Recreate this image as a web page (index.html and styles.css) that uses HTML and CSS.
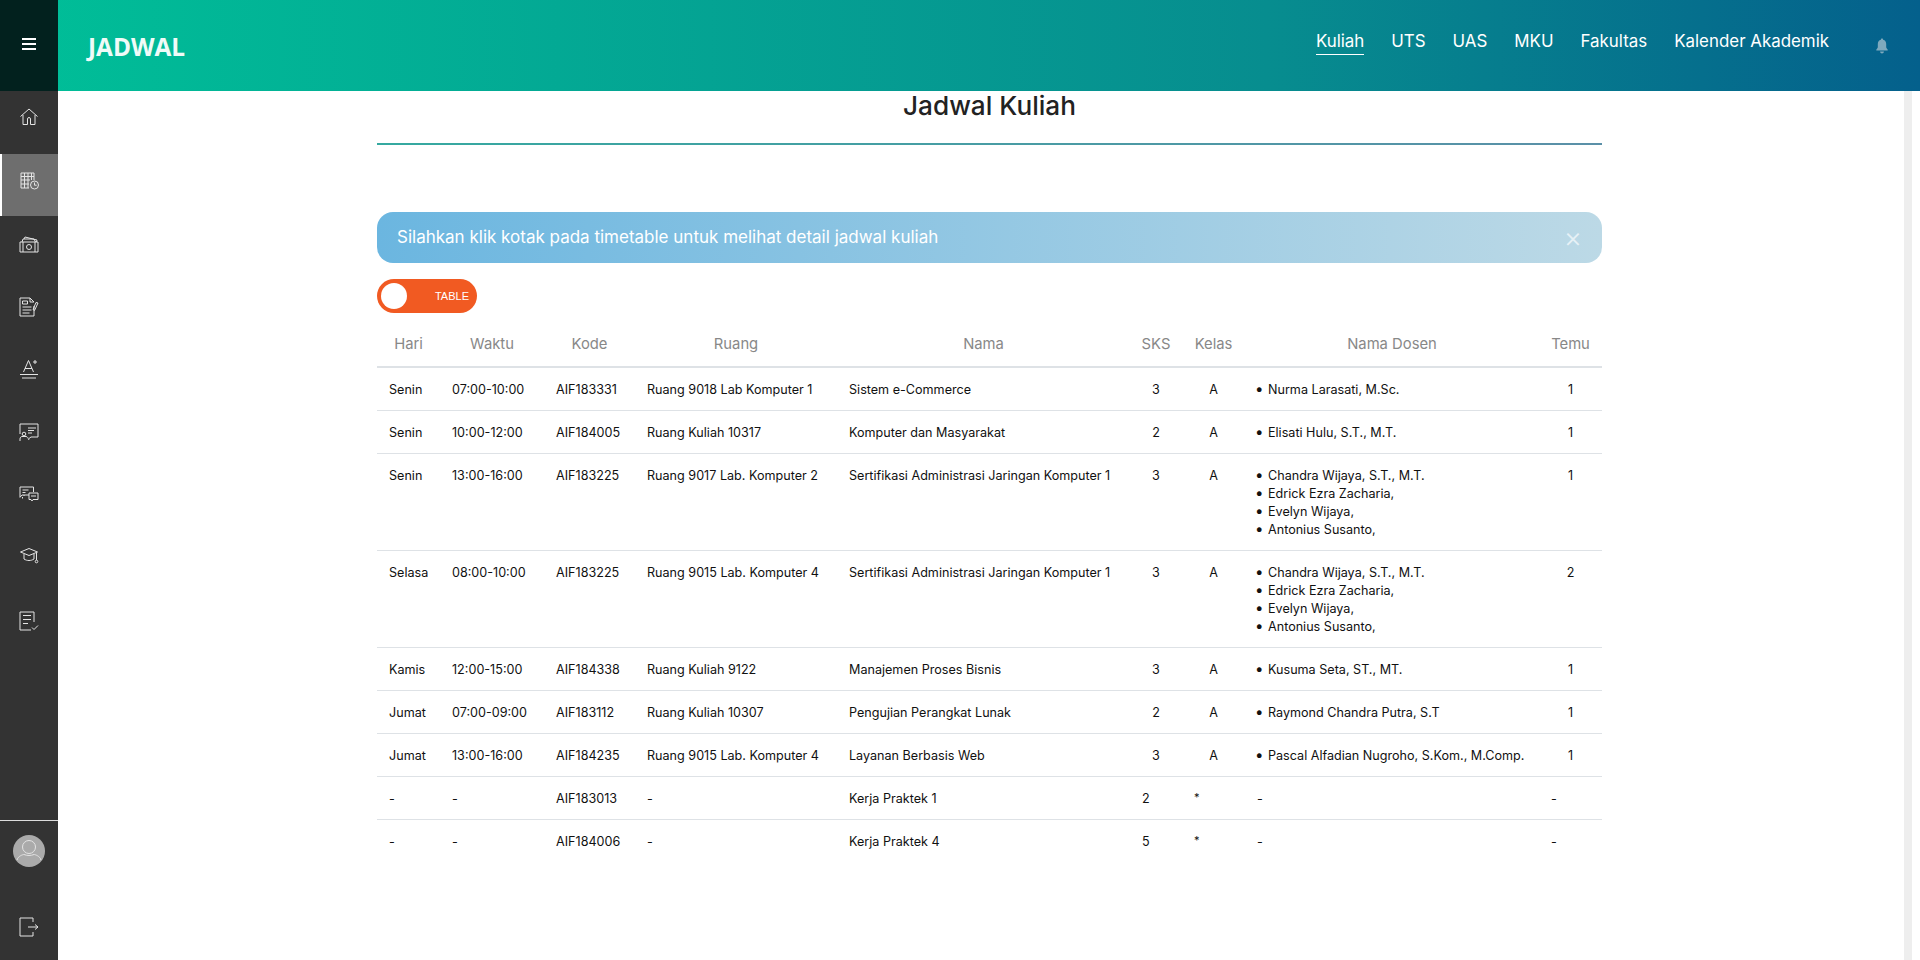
FILE: index.html
```html
<!DOCTYPE html>
<html lang="en">
<head>
    <meta charset="UTF-8">
    <meta name="viewport" content="width=device-width, initial-scale=1.0">
    <title>Jadwal Kuliah</title>
    <link rel="stylesheet" href="styles.css">
</head>
<body>
    <header class="topbar">
        <div class="menu-toggle">
            <span></span><span></span><span></span>
        </div>
        <div class="brand">JADWAL</div>
        <nav class="topnav">
            <a class="active" href="#">Kuliah</a>
            <a href="#">UTS</a>
            <a href="#">UAS</a>
            <a href="#">MKU</a>
            <a href="#">Fakultas</a>
            <a href="#">Kalender Akademik</a>
        </nav>
        <svg class="bell" viewBox="0 0 16 18" width="14" height="16">
            <path d="M8 .5c.8 0 1.3.6 1.3 1.3 2.3.6 3.5 2.5 3.5 5V10c0 1 .9 2 1.7 3v1H1.500v-1c.8-1 1.700-2 1.700-3V6.800c0-2.500 1.200-4.400 3.500-5C6.700 1.100 7.200.5 8 .5z"/>
            <path d="M5.800 15.300h4.400c0 1.300-1 2.200-2.200 2.200s-2.200-.9-2.200-2.200z"/>
        </svg>
    </header>

    <div class="layout">
        <aside class="sidebar">
            <a class="side-item side-home" href="#">
                <svg viewBox="0 0 20 20" width="20" height="20"><path d="M1.5 9.500 10 2l8.500 7.500M4 8v9.500h4.500V12a1.500 1.500 0 0 1 3 0v5.500H16V8"/></svg>
            </a>
            <a class="side-item active side-up-more" href="#">
                <svg viewBox="0 0 20 20" width="20" height="20"><path d="M1 2h13v7M1 2v15h8M1 5.500h13M1 9h9M1 13h8M4.500 2v15M8 2v15M11.500 2v7"/><circle cx="14.500" cy="14" r="4"/><path d="M14.500 11.500v2.700h2.200"/></svg>
            </a>
            <a class="side-item side-up" href="#">
                <svg viewBox="0 0 20 20" width="20" height="20"><path d="M1 7h18v10H1zM3 7l1-3h11l1.500 3M5 4l1-2 12 3-.5 2M4 7v10M16 7v10"/><circle cx="10" cy="12" r="2.500"/></svg>
            </a>
            <a class="side-item side-up" href="#">
                <svg viewBox="0 0 20 20" width="20" height="20"><path d="M15 9v10H1V1h10l4 4M11 1v4h4M3.500 4h5v3h-5zM3.500 10h9M3.500 13h9M3.500 16h7M19 6l-3.500 7.500-1.500-1 3-7z"/></svg>
            </a>
            <a class="side-item side-up" href="#">
                <svg viewBox="0 0 20 20" width="20" height="20"><path d="M4.500 13 9.500 1.500 14.500 13M6 9.500h7M16 1v4M14 3h4M1 15.500h18"/><path d="M3 19h14"/></svg>
            </a>
            <a class="side-item" href="#">
                <svg viewBox="0 0 20 20" width="20" height="20"><path d="M1 11V1h18v13h-7l-2 1.500M9 5h8M9 7.500h6M9 10h4"/><circle cx="5" cy="11" r="1.800"/><path d="M1 18v-2c0-1.500 1-2.500 2-2.500h4c1.500 0 2 1.500 3 3.500"/></svg>
            </a>
            <a class="side-item" href="#">
                <svg viewBox="0 0 20 20" width="20" height="20"><path d="M10 10H3l-2 2.300V2h13.500v5M3.500 5h6M3.500 7.500h3M10 8h9v6.500h-5l-1 1.500-1-1.500h-2zM12 11h5"/><path d="M3.500 12v1.500M5 10v1"/></svg>
            </a>
            <a class="side-item side-up" href="#">
                <svg viewBox="0 0 20 20" width="20" height="20"><path d="M1.500 7 10 3.500 18.500 7 10 10.500zM5 9v5c3 2 7 2 10 0V9M17.500 8v7"/><circle cx="17.500" cy="16.500" r="1.300"/></svg>
            </a>
            <a class="side-item side-down" href="#">
                <svg viewBox="0 0 20 20" width="20" height="20"><path d="M15 11V1H1v18h11M4 4.500h8M4 8.500h8M4 12.500h5M13 16.500l2 2 4-4"/></svg>
            </a>

            <div class="side-bottom">
                <div class="avatar">
                    <svg viewBox="0 0 32 32" width="32" height="32"><circle cx="16" cy="12" r="6.500"/><path d="M4 25c1-4 6-5.500 7-5.500 3 1.300 7 1.300 10 0 1 0 6 1.500 7 5.500"/></svg>
                </div>
                <a class="logout" href="#">
                    <svg viewBox="0 0 20 20" width="20" height="20"><path d="M14 5V1H1v18h13v-4M9 10h10M16 7.500l3 2.500-3 2.500"/></svg>
                </a>
            </div>
        </aside>

        <main class="content">
            <div class="container">
                <h1 class="page-title">Jadwal Kuliah</h1>
                <div class="title-rule"></div>

                <div class="alert">
                    <span>Silahkan klik kotak pada timetable untuk melihat detail jadwal kuliah</span>
                    <span class="alert-close">&times;</span>
                </div>

                <div class="switch">
                    <span class="switch-knob"></span>
                    <span class="switch-label">TABLE</span>
                </div>

                <table class="schedule">
                    <colgroup>
                        <col class="col-hari">
                        <col class="col-waktu">
                        <col class="col-kode">
                        <col class="col-ruang">
                        <col class="col-nama">
                        <col class="col-sks">
                        <col class="col-kelas">
                        <col class="col-dosen">
                        <col class="col-temu">
                    </colgroup>
                    <thead>
                        <tr>
                            <th>Hari</th>
                            <th>Waktu</th>
                            <th>Kode</th>
                            <th>Ruang</th>
                            <th>Nama</th>
                            <th>SKS</th>
                            <th>Kelas</th>
                            <th>Nama Dosen</th>
                            <th>Temu</th>
                        </tr>
                    </thead>
                    <tbody>
                        <tr>
                            <td>Senin</td>
                            <td>07:00-10:00</td>
                            <td>AIF183331</td>
                            <td>Ruang 9018 Lab Komputer 1</td>
                            <td>Sistem e-Commerce</td>
                            <td class="center">3</td>
                            <td class="center">A</td>
                            <td><ul><li>Nurma Larasati, M.Sc.</li></ul></td>
                            <td class="center">1</td>
                        </tr>
                        <tr>
                            <td>Senin</td>
                            <td>10:00-12:00</td>
                            <td>AIF184005</td>
                            <td>Ruang Kuliah 10317</td>
                            <td>Komputer dan Masyarakat</td>
                            <td class="center">2</td>
                            <td class="center">A</td>
                            <td><ul><li>Elisati Hulu, S.T., M.T.</li></ul></td>
                            <td class="center">1</td>
                        </tr>
                        <tr>
                            <td>Senin</td>
                            <td>13:00-16:00</td>
                            <td>AIF183225</td>
                            <td>Ruang 9017 Lab. Komputer 2</td>
                            <td>Sertifikasi Administrasi Jaringan Komputer 1</td>
                            <td class="center">3</td>
                            <td class="center">A</td>
                            <td>
                                <ul>
                                    <li>Chandra Wijaya, S.T., M.T.</li>
                                    <li>Edrick Ezra Zacharia,</li>
                                    <li>Evelyn Wijaya,</li>
                                    <li>Antonius Susanto,</li>
                                </ul>
                            </td>
                            <td class="center">1</td>
                        </tr>
                        <tr>
                            <td>Selasa</td>
                            <td>08:00-10:00</td>
                            <td>AIF183225</td>
                            <td>Ruang 9015 Lab. Komputer 4</td>
                            <td>Sertifikasi Administrasi Jaringan Komputer 1</td>
                            <td class="center">3</td>
                            <td class="center">A</td>
                            <td>
                                <ul>
                                    <li>Chandra Wijaya, S.T., M.T.</li>
                                    <li>Edrick Ezra Zacharia,</li>
                                    <li>Evelyn Wijaya,</li>
                                    <li>Antonius Susanto,</li>
                                </ul>
                            </td>
                            <td class="center">2</td>
                        </tr>
                        <tr>
                            <td>Kamis</td>
                            <td>12:00-15:00</td>
                            <td>AIF184338</td>
                            <td>Ruang Kuliah 9122</td>
                            <td>Manajemen Proses Bisnis</td>
                            <td class="center">3</td>
                            <td class="center">A</td>
                            <td><ul><li>Kusuma Seta, ST., MT.</li></ul></td>
                            <td class="center">1</td>
                        </tr>
                        <tr>
                            <td>Jumat</td>
                            <td>07:00-09:00</td>
                            <td>AIF183112</td>
                            <td>Ruang Kuliah 10307</td>
                            <td>Pengujian Perangkat Lunak</td>
                            <td class="center">2</td>
                            <td class="center">A</td>
                            <td><ul><li>Raymond Chandra Putra, S.T</li></ul></td>
                            <td class="center">1</td>
                        </tr>
                        <tr>
                            <td>Jumat</td>
                            <td>13:00-16:00</td>
                            <td>AIF184235</td>
                            <td>Ruang 9015 Lab. Komputer 4</td>
                            <td>Layanan Berbasis Web</td>
                            <td class="center">3</td>
                            <td class="center">A</td>
                            <td><ul><li>Pascal Alfadian Nugroho, S.Kom., M.Comp.</li></ul></td>
                            <td class="center">1</td>
                        </tr>
                        <tr>
                            <td>-</td>
                            <td>-</td>
                            <td>AIF183013</td>
                            <td>-</td>
                            <td>Kerja Praktek 1</td>
                            <td>2</td>
                            <td><span class="star">*</span></td>
                            <td>-</td>
                            <td>-</td>
                        </tr>
                        <tr>
                            <td>-</td>
                            <td>-</td>
                            <td>AIF184006</td>
                            <td>-</td>
                            <td>Kerja Praktek 4</td>
                            <td>5</td>
                            <td><span class="star">*</span></td>
                            <td>-</td>
                            <td>-</td>
                        </tr>
                    </tbody>
                </table>
            </div>
        </main>

        <div class="scroll-track"></div>
    </div>
</body>
</html>
```

FILE: styles.css
```css
* {
    box-sizing: border-box;
}

body {
    display: flex;
    flex-direction: column;
    height: 100vh;
    margin: 0;
    overflow: hidden;
    font-family: Inter, "Open Sans", sans-serif;
    font-size: 12.6px;
    color: #111;
    background-color: #fff;
}

a {
    color: inherit;
    text-decoration: none;
}

/* top bar */
.topbar {
    display: flex;
    align-items: center;
    flex: 0 0 91px;
    padding-right: 31px;
    color: #fff;
    background: linear-gradient(to right, #00bf98, #078d8f 66%, #04608c);
}

.menu-toggle {
    display: flex;
    flex-direction: column;
    justify-content: center;
    align-items: center;
    gap: 3px;
    width: 58px;
    height: 91px;
    padding-bottom: 3px;
    background-color: #02211e;
}

.menu-toggle span {
    width: 14px;
    height: 2px;
    background-color: #fff;
}

.brand {
    margin-left: 30px;
    padding-top: 2px;
    font-family: "Open Sans", sans-serif;
    font-size: 24.4px;
    font-weight: 700;
    color: #f0fbf8;
}

.topnav {
    display: flex;
    gap: 27px;
    margin-left: auto;
    margin-right: 46px;
    padding-bottom: 9px;
    font-size: 16.9px;
}

.topnav a {
    padding: 3px 0;
    border-bottom: 1px solid transparent;
}

.topnav a.active {
    border-bottom-color: #fff;
}

.bell {
    fill: #7fa9bd;
}

/* sidebar */
.layout {
    display: flex;
    flex: 1;
    min-height: 0;
}

.sidebar {
    display: flex;
    flex-direction: column;
    flex: 0 0 58px;
    background-color: #333;
}

.sidebar svg {
    fill: none;
    stroke: #e4e4e4;
    stroke-width: 1;
}

.side-item {
    display: flex;
    justify-content: center;
    align-items: center;
    height: 62px;
}

.side-item.active {
    background-color: #6e6e6e;
    border-left: 2px solid #fff;
}

.side-home {
    align-items: flex-start;
    height: 63px;
    padding-top: 16px;
}

.side-up {
    padding-bottom: 4px;
}

.side-up-more {
    padding-bottom: 8px;
}

.side-down {
    padding-top: 4px;
}

.side-bottom {
    margin-top: auto;
    height: 140px;
    border-top: 1px solid #ddd;
    display: flex;
    flex-direction: column;
    align-items: center;
}

.avatar {
    display: flex;
    width: 32px;
    height: 32px;
    margin-top: 14px;
    border-radius: 50%;
    background-color: #aaa;
}

.logout {
    display: flex;
    margin-top: 50px;
}

/* content */
.content {
    flex: 1;
    min-width: 0;
}

.container {
    width: 1225px;
    margin-left: 319px;
}

.page-title {
    margin: 0;
    height: 52px;
    line-height: 29px;
    text-align: center;
    font-size: 26.2px;
    font-weight: 500;
    color: #222;
}

.title-rule {
    height: 2px;
    background: linear-gradient(to right, #35a9a0, #5b90a8);
}

.alert {
    display: flex;
    justify-content: space-between;
    align-items: center;
    height: 51px;
    margin-top: 67px;
    padding: 0 20px 1px;
    border-radius: 16px;
    font-size: 17px;
    color: #fff;
    background: linear-gradient(to right, #6bb6e0, #bcd9e6);
}

.alert-close {
    font-size: 28px;
    font-weight: 300;
    color: #e6f1f6;
}

.switch {
    display: flex;
    justify-content: space-between;
    align-items: center;
    width: 100px;
    height: 34px;
    margin: 16px 0 8px;
    padding: 0 8px 0 4px;
    border-radius: 17px;
    background-color: #f15a22;
}

.switch-knob {
    width: 26px;
    height: 26px;
    border-radius: 50%;
    background-color: #fff;
}

.switch-label {
    font-family: "Liberation Sans", Arial, sans-serif;
    font-size: 11px;
    color: #fff;
}

/* table */
.schedule {
    width: 100%;
    table-layout: fixed;
    border-collapse: collapse;
}

.col-hari { width: 63px; }
.col-waktu { width: 104px; }
.col-kode { width: 91px; }
.col-ruang { width: 202px; }
.col-nama { width: 293px; }
.col-sks { width: 52px; }
.col-kelas { width: 63px; }
.col-dosen { width: 294px; }
.col-temu { width: 63px; }

.schedule th {
    padding: 13px 0 11px;
    line-height: 21px;
    font-size: 14.8px;
    font-weight: 400;
    color: #888;
    border-bottom: 2px solid #dee2e6;
}

.schedule td {
    padding: 13px 12px 11px;
    line-height: 18px;
    vertical-align: top;
    border-top: 1px solid #dee2e6;
    white-space: nowrap;
}

.schedule td.center {
    padding-left: 0;
    padding-right: 0;
    text-align: center;
}

.schedule ul {
    margin: 0;
    padding: 0;
    list-style: none;
}

.schedule li::before {
    content: "\2022";
    display: inline-block;
    width: 13px;
    margin-left: -2px;
    font-size: 15px;
    line-height: 1;
}

.star {
    position: relative;
    top: -2px;
    font-size: 11px;
}

/* scrollbar track on the right */
.scroll-track {
    flex: 0 0 8px;
    margin-right: 8px;
    background-color: #eee;
}
```
